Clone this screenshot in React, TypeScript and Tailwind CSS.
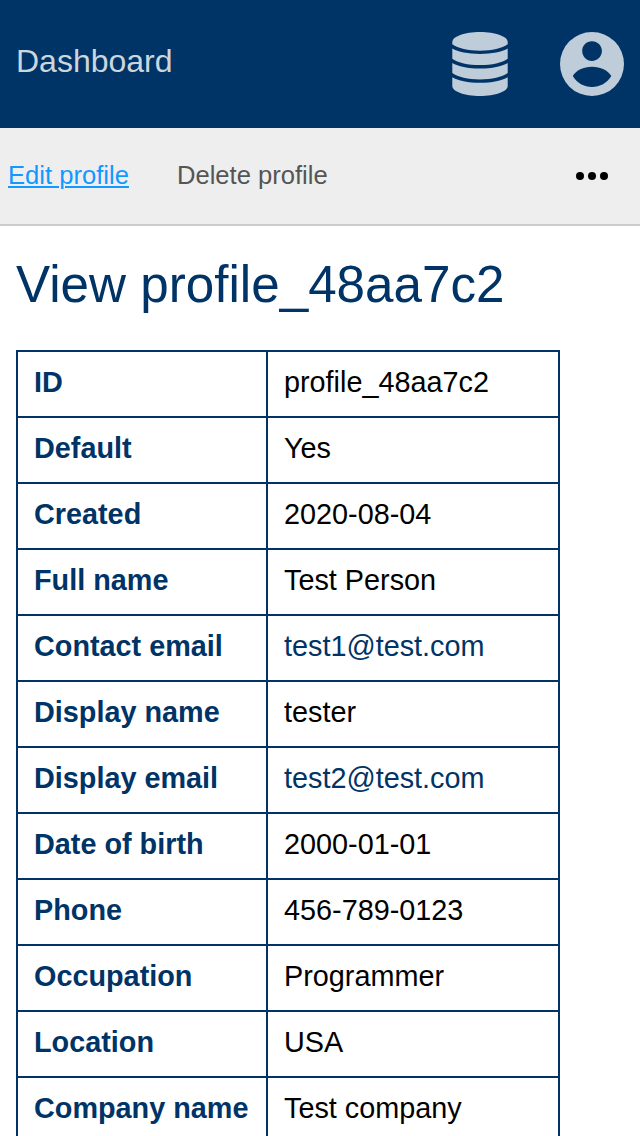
import React from "react";

const rows: { label: string; value: string; link?: boolean }[] = [
  { label: "ID", value: "profile_48aa7c2" },
  { label: "Default", value: "Yes" },
  { label: "Created", value: "2020-08-04" },
  { label: "Full name", value: "Test Person" },
  { label: "Contact email", value: "test1@test.com", link: true },
  { label: "Display name", value: "tester" },
  { label: "Display email", value: "test2@test.com", link: true },
  { label: "Date of birth", value: "2000-01-01" },
  { label: "Phone", value: "456-789-0123" },
  { label: "Occupation", value: "Programmer" },
  { label: "Location", value: "USA" },
  { label: "Company name", value: "Test company" },
];

export default function App() {
  return (
    <div className="h-[1136px] w-[640px] overflow-hidden bg-white font-['Liberation_Sans',sans-serif] text-black">
      <header className="flex h-32 items-center justify-between bg-[#003366] px-4 text-[#bfccd9]">
        <span className="pb-1.5 text-[32px] leading-9 text-[#ccd6dd]">Dashboard</span>
        <div className="flex items-center gap-[52px]">
          <svg viewBox="0 0 56 64" className="h-16 w-14" fill="currentColor">
            <path d="M.3 10C.3 4.500 12.500 0 28 0s27.700 4.500 27.700 10v2.300C50 16.400 40 18.700 28 18.700S6 16.400 .3 12.300z" />
            <path d="M.3 16.600C6 20 16 22 28 22s22-2 27.700-5.400V26.800C50 31 40 33.100 28 33.100S6 31 .3 26.800z" />
            <path d="M.3 30.900C6 34.400 16 36.400 28 36.400s22-2 27.700-5.500V41.100C50 45.300 40 47.400 28 47.400S6 45.300 .3 41.100z" />
            <path d="M.3 45.200C6 48.700 16 50.700 28 50.700s22-2 27.700-5.500V54C55.700 59.500 43.500 64 28 64S.3 59.500 .3 54z" />
          </svg>
          <svg viewBox="0 0 64 64" className="size-16" fill="currentColor">
            <path fillRule="evenodd" d="M32 0a32 32 0 1 0 0 64 32 32 0 0 0 0-64zm0 9.300c5.500 0 9.900 4.300 9.900 9.700S37.500 28.900 32 28.900 22.200 24.500 22.200 19 26.500 9.300 32 9.300zM12.800 44C16 38.500 23.500 34.800 32 34.800s16 3.700 19.300 9.200C47 51 40 55 32 55s-15-4-19.200-11z" />
          </svg>
        </div>
      </header>
      <nav className="flex h-[98px] items-center border-b-2 border-[#cccccc] bg-[#eeeeee] pr-8 pl-2 text-[25.6px] leading-7">
        <a href="#" className="pb-0.5 text-[#1199ff] underline decoration-2 underline-offset-2">Edit profile</a>
        <a href="#" className="ml-12 pb-0.5 text-[#555555]">Delete profile</a>
        <button aria-label="More" className="ml-auto flex gap-1">
          <span className="size-2 rounded-full bg-black" />
          <span className="size-2 rounded-full bg-black" />
          <span className="size-2 rounded-full bg-black" />
        </button>
      </nav>
      <main className="px-4 pt-[30px]">
        <h1 className="text-[51.2px] leading-[57px] text-[#003366]">View profile_48aa7c2</h1>
        <table className="mt-[37px] w-[544px] table-fixed border-collapse text-[28.8px] leading-8">
          <colgroup>
            <col className="w-[250px]" />
            <col />
          </colgroup>
          <tbody>
            {rows.map((r) => (
              <tr key={r.label} className="h-[66px]">
                <th className="border-2 border-[#003366] px-4 py-0 pb-1 text-left font-bold whitespace-nowrap text-[#003366]">{r.label}</th>
                <td className="border-2 border-[#003366] px-4 py-0 pb-1">
                  {r.link ? <a href="#" className="text-[#003366]">{r.value}</a> : r.value}
                </td>
              </tr>
            ))}
          </tbody>
        </table>
      </main>
    </div>
  );
}
